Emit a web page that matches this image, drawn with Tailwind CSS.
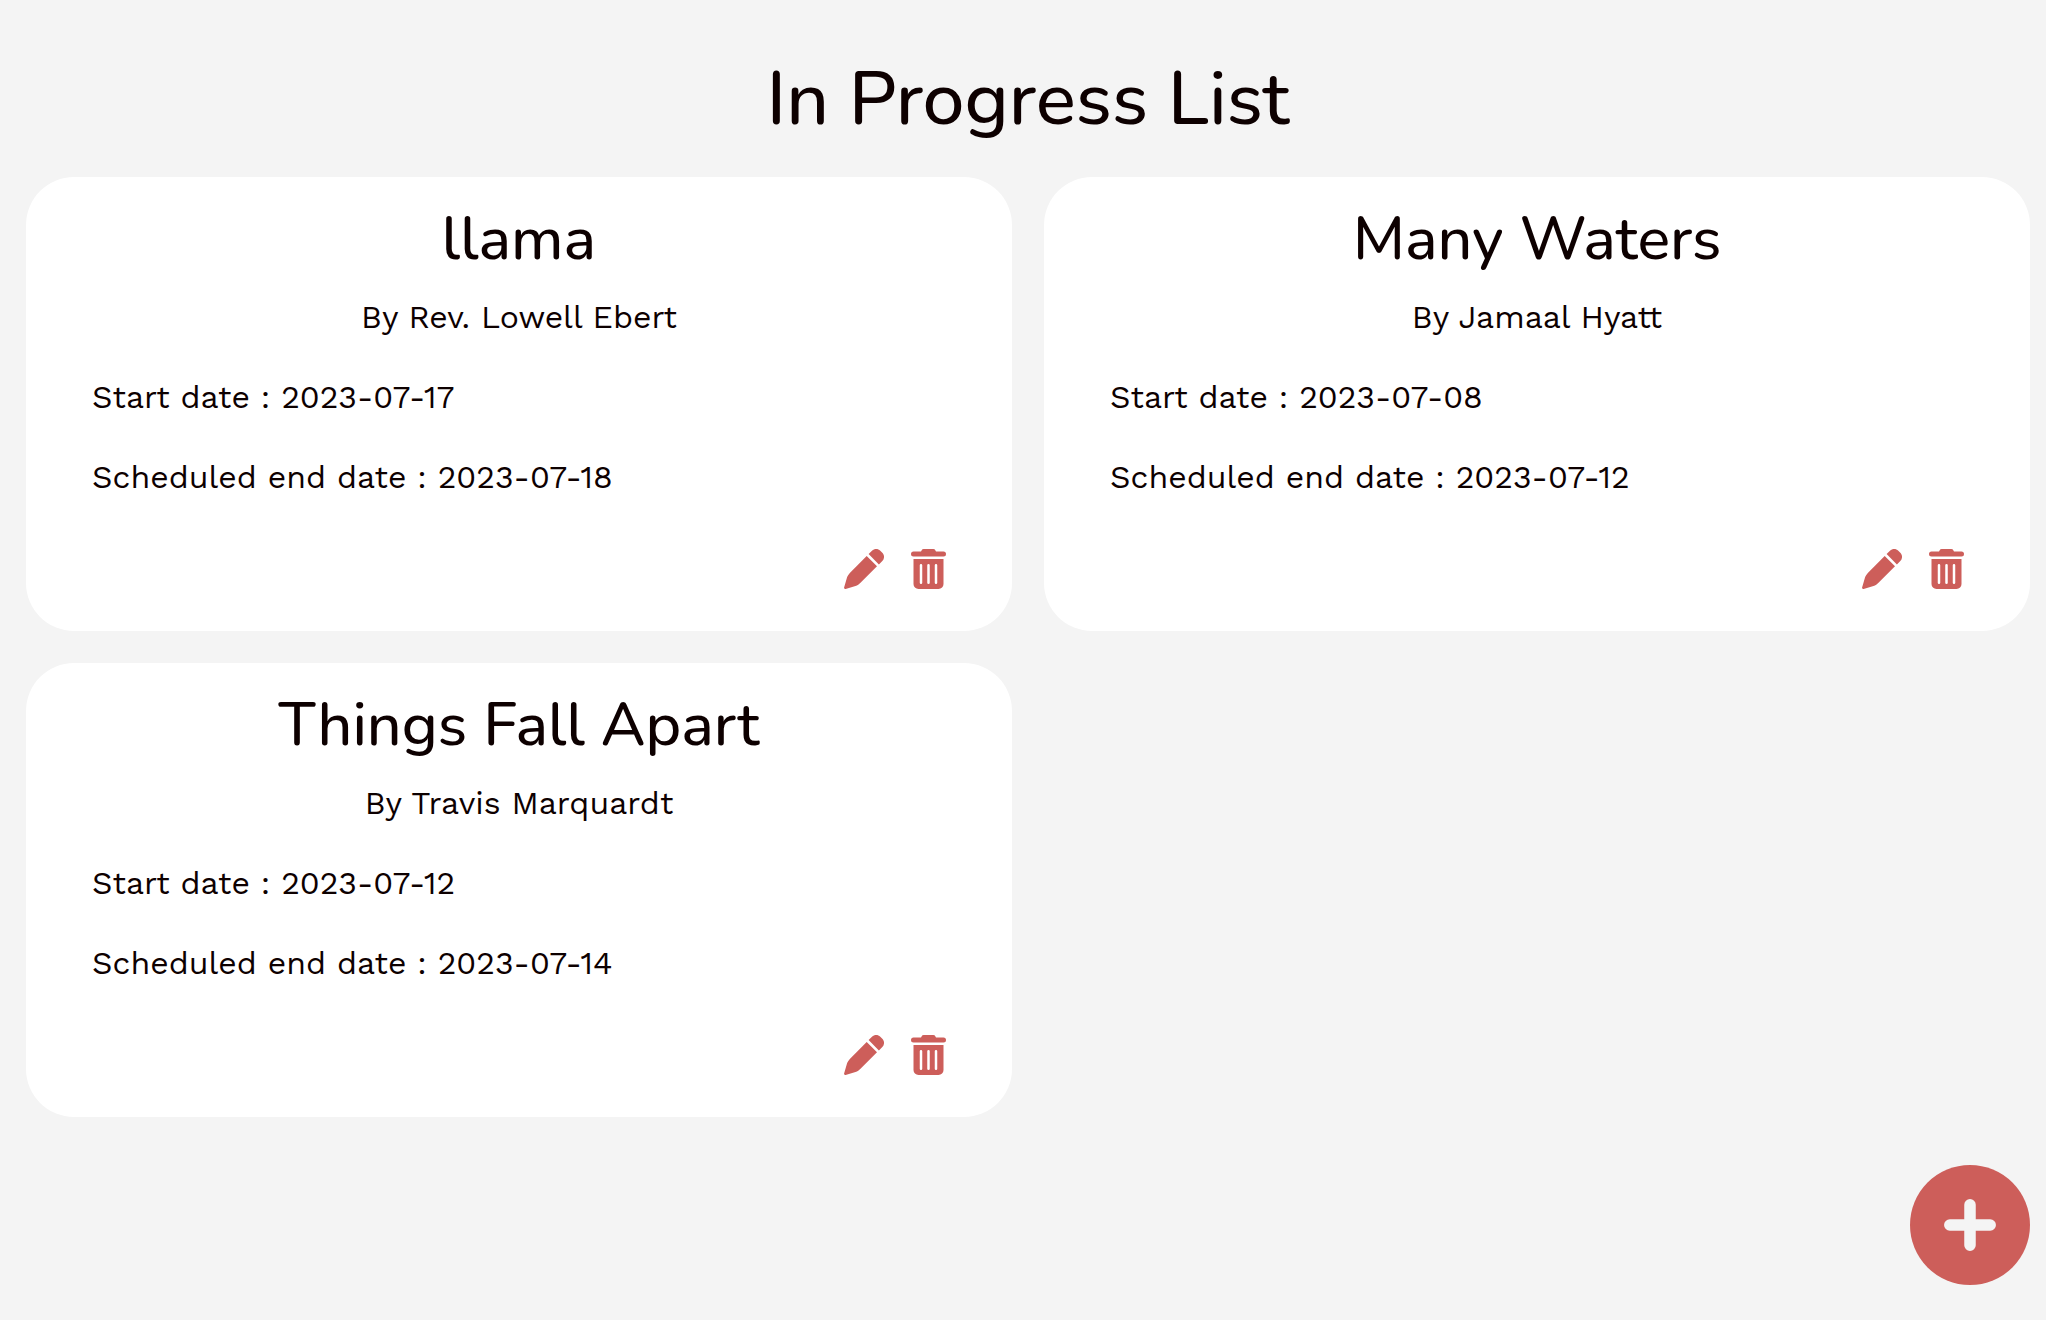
<!DOCTYPE html>
<html lang="en">
<head>
<meta charset="utf-8">
<meta name="viewport" content="width=device-width, initial-scale=1">
<title>In Progress List</title>
<script src="https://cdn.jsdelivr.net/npm/@tailwindcss/browser@4"></script>
</head>
<body class="min-h-screen bg-[#f4f4f4] font-['Work_Sans','DejaVu_Sans',sans-serif] text-[32px] leading-10 text-[#0d0000]">
<svg class="hidden" aria-hidden="true">
  <symbol id="pencil" viewBox="0 0 40 40">
    <path d="M22.7 7 33 17.3 16.5 33.7C15 35.2 13.6 36.3 11.5 37L1.6 39.9C.6 40.2-.2 39.4.1 38.4L3 28.5C3.6 26.6 4.8 25 6.3 23.4Z"/>
    <path d="M24.6 5.1 28 1.8C30.4-.6 34-.6 36.3 1.8L38.3 3.8C40.6 6.1 40.6 9.6 38.3 12L34.9 15.4Z"/>
  </symbol>
  <symbol id="trash" viewBox="0 0 448 512">
    <path d="M32 128h384v320a64 64 0 0 1-64 64H96a64 64 0 0 1-64-64zM128 192a16 16 0 0 0-16 16v224a16 16 0 0 0 32 0V208a16 16 0 0 0-16-16zM224 192a16 16 0 0 0-16 16v224a16 16 0 0 0 32 0V208a16 16 0 0 0-16-16zM320 192a16 16 0 0 0-16 16v224a16 16 0 0 0 32 0V208a16 16 0 0 0-16-16z" fill-rule="evenodd"/>
    <path d="M135 18A32 32 0 0 1 164 0h120a32 32 0 0 1 29 18l7 14h96a32 32 0 0 1 0 64H32a32 32 0 0 1 0-64h96z"/>
  </symbol>
</svg>

<main class="pt-[49px] pr-4 pb-[35px] pl-[26px]">
  <h1 class="text-center font-['Nunito','Open_Sans',sans-serif] text-[75px] leading-[100px] font-medium">In Progress List</h1>

  <div class="mt-7 grid grid-cols-2 gap-8">
    <article class="flex flex-col rounded-[48px] bg-white px-[66px] pt-[26px] pb-[42px]">
      <h2 class="text-center font-['Nunito','Open_Sans',sans-serif] text-[61px] leading-[72px] font-medium">llama</h2>
      <div class="mt-[22px] flex flex-col gap-10">
        <p class="text-center">By Rev. Lowell Ebert</p>
        <p>Start date : 2023-07-17</p>
        <p>Scheduled end date : 2023-07-18</p>
      </div>
      <div class="mt-[52px] flex justify-end gap-[27px] text-[#cd5e5a]">
        <button type="button" aria-label="Edit llama"><svg class="size-10 fill-current"><use href="#pencil"/></svg></button>
        <button type="button" aria-label="Delete llama"><svg class="h-10 w-[35px] fill-current"><use href="#trash"/></svg></button>
      </div>
    </article>

    <article class="flex flex-col rounded-[48px] bg-white px-[66px] pt-[26px] pb-[42px]">
      <h2 class="text-center font-['Nunito','Open_Sans',sans-serif] text-[61px] leading-[72px] font-medium">Many Waters</h2>
      <div class="mt-[22px] flex flex-col gap-10">
        <p class="text-center">By Jamaal Hyatt</p>
        <p>Start date : 2023-07-08</p>
        <p>Scheduled end date : 2023-07-12</p>
      </div>
      <div class="mt-[52px] flex justify-end gap-[27px] text-[#cd5e5a]">
        <button type="button" aria-label="Edit Many Waters"><svg class="size-10 fill-current"><use href="#pencil"/></svg></button>
        <button type="button" aria-label="Delete Many Waters"><svg class="h-10 w-[35px] fill-current"><use href="#trash"/></svg></button>
      </div>
    </article>

    <article class="flex flex-col rounded-[48px] bg-white px-[66px] pt-[26px] pb-[42px]">
      <h2 class="text-center font-['Nunito','Open_Sans',sans-serif] text-[61px] leading-[72px] font-medium">Things Fall Apart</h2>
      <div class="mt-[22px] flex flex-col gap-10">
        <p class="text-center">By Travis Marquardt</p>
        <p>Start date : 2023-07-12</p>
        <p>Scheduled end date : 2023-07-14</p>
      </div>
      <div class="mt-[52px] flex justify-end gap-[27px] text-[#cd5e5a]">
        <button type="button" aria-label="Edit Things Fall Apart"><svg class="size-10 fill-current"><use href="#pencil"/></svg></button>
        <button type="button" aria-label="Delete Things Fall Apart"><svg class="h-10 w-[35px] fill-current"><use href="#trash"/></svg></button>
      </div>
    </article>
  </div>
</main>

<button type="button" aria-label="Add book" class="fixed right-4 bottom-[35px] flex size-[120px] items-center justify-center rounded-full bg-[#cd5e5a] text-[#f4f4f4]">
  <svg class="size-[52px]" viewBox="0 0 52 52" fill="none" stroke="currentColor" stroke-width="11.5" stroke-linecap="round"><path d="M26 5.8v40.4M5.8 26h40.4"/></svg>
</button>
</body>
</html>
